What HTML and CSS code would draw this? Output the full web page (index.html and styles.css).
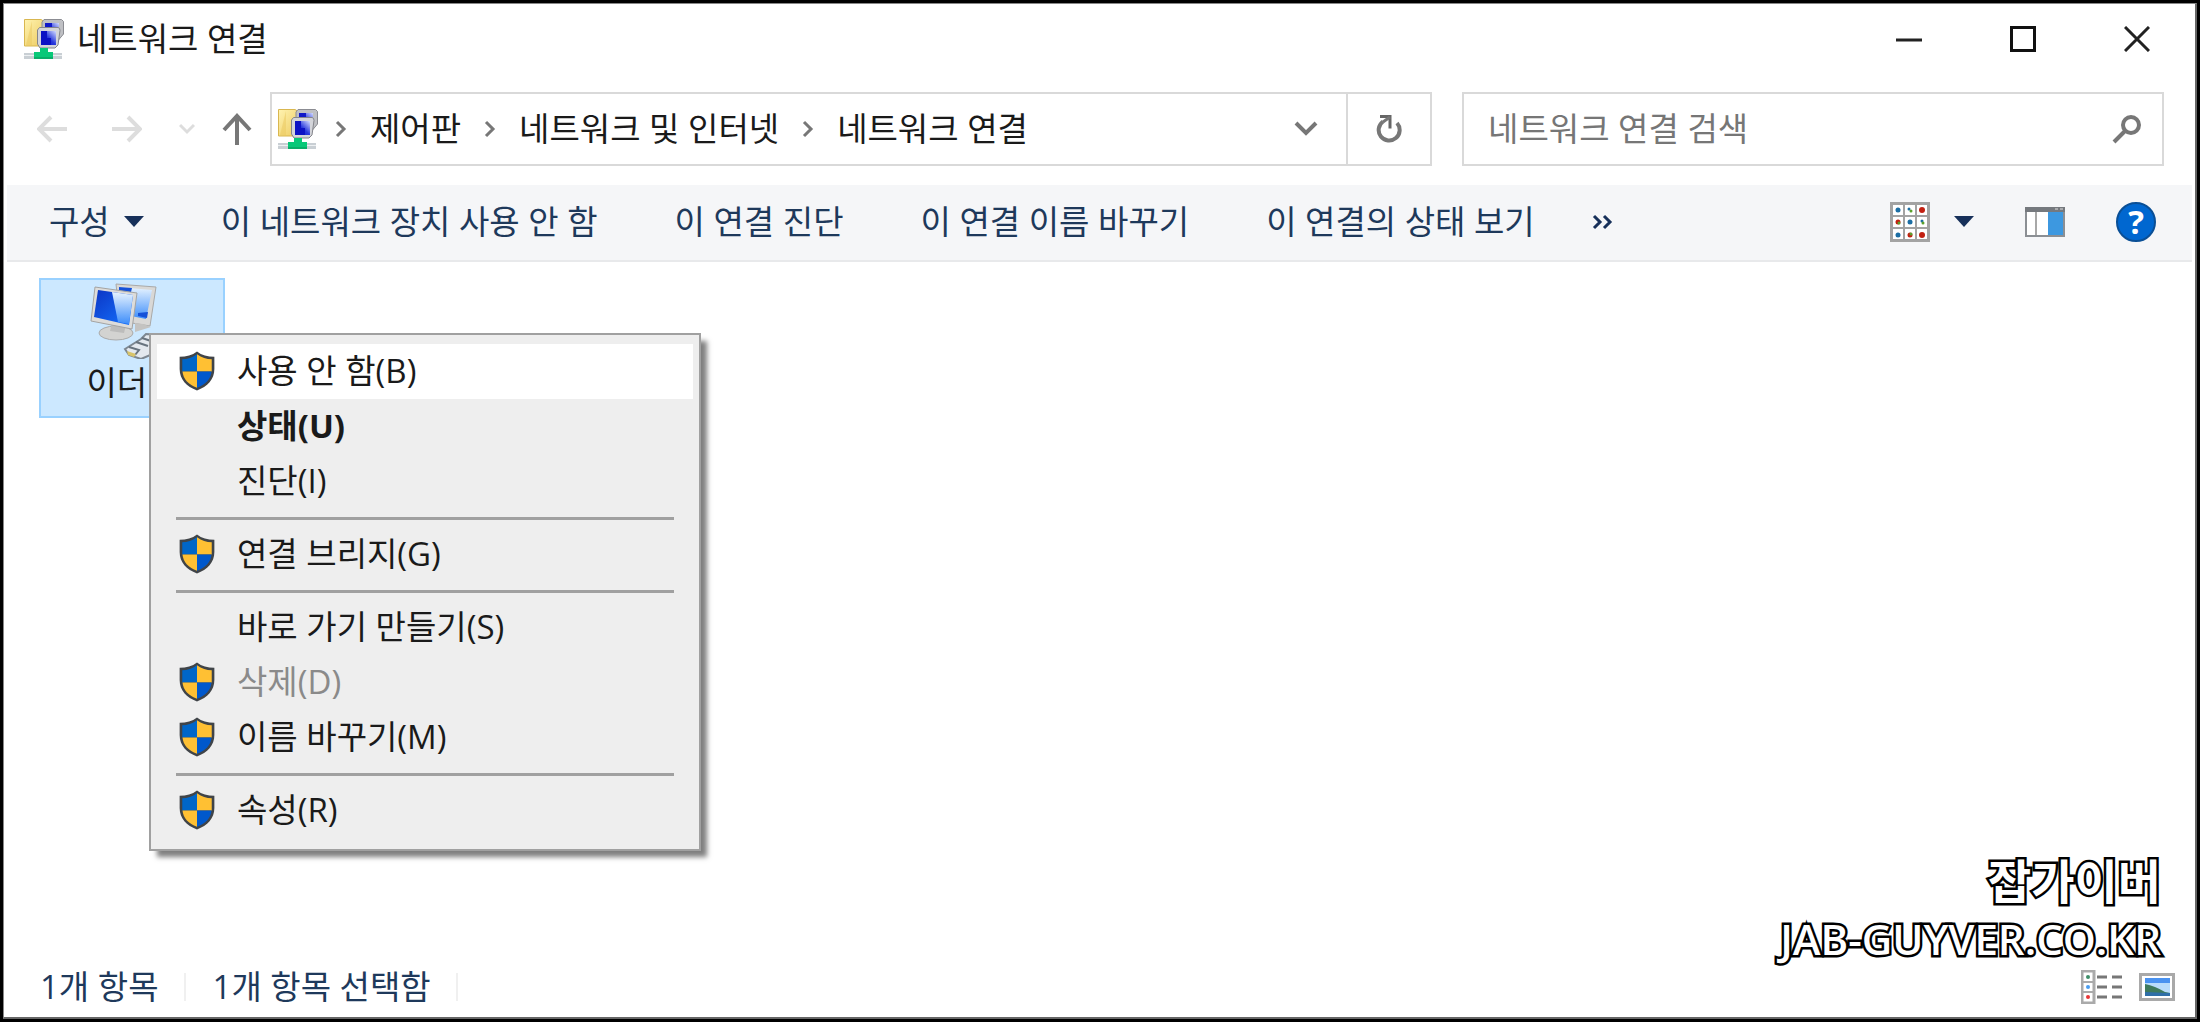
FILE: index.html
```html
<!DOCTYPE html>
<html lang="ko">
<head>
    <meta charset="UTF-8">
    <meta name="viewport" content="width=device-width, initial-scale=1.0">
    <title>네트워크 연결</title>
    <link rel="stylesheet" href="styles.css">
</head>
<body>
    <!-- Shared icons -->
    <svg class="sprite" aria-hidden="true">
        <defs>
            <linearGradient id="folder-fill" x1="0" y1="0" x2="1" y2="1">
                <stop offset="0" stop-color="#fff3b0"/>
                <stop offset="1" stop-color="#ecc95c"/>
            </linearGradient>
            <linearGradient id="screen-fill" x1="0" y1="1" x2="1" y2="0">
                <stop offset="0" stop-color="#0a14c4"/>
                <stop offset="0.5" stop-color="#2838dc"/>
                <stop offset="1" stop-color="#d4dcff"/>
            </linearGradient>
            <linearGradient id="glass-fill" x1="0" y1="0" x2="0" y2="1">
                <stop offset="0" stop-color="#e8f4ff"/>
                <stop offset="1" stop-color="#3d8dfa"/>
            </linearGradient>
            <linearGradient id="blue-fill" x1="0" y1="0" x2="1" y2="1">
                <stop offset="0" stop-color="#0b35c4"/>
                <stop offset="1" stop-color="#1673ff"/>
            </linearGradient>
        </defs>
        <symbol id="icon-network" viewBox="0 0 40 42">
            <path d="M0.5 1.5H17l5 3V28H0.5z" fill="url(#folder-fill)" stroke="#d9b750"/>
            <path d="M2 27L8 3v25z" fill="#e9c75e" opacity=".5"/>
            <path d="M20 1.5h17.500l2 2V16l-5 6H20l-2-4V4z" fill="#bfc0c4" stroke="#8b8c92"/>
            <path d="M21 5h14v13H21z" fill="url(#screen-fill)"/>
            <path d="M21 5h7v4h-7z" fill="#1018c8"/>
            <path d="M15.500 9.500H34q2 0 2 3L34 27l-3 3H16l-2.500-4V12z" fill="#d4d5da" stroke="#85868c"/>
            <path d="M17 13h15v14H17z" fill="url(#screen-fill)"/>
            <path d="M17 13h6v7h4v7H17z" fill="#0c12c4"/>
            <path d="M0 35h38v6H0z" fill="#c9cfd4"/>
            <path d="M0 37h38v1H0z" fill="#edf0f2"/>
            <path d="M16 30h8v4h5v7H10v-7h6z" fill="#08c878"/>
            <path d="M10 40h19" stroke="#0b9358"/>
        </symbol>
        <symbol id="icon-shield" viewBox="1 1 34 38">
            <path d="M18 1.500C13.500 5 8 6.500 1.500 6.500V18C1.500 28 8 34.500 18 38.500C28 34.500 34.500 28 34.500 18V6.500C28 6.500 22.500 5 18 1.500z" fill="#404448"/>
            <path d="M18 4C13.500 7.500 9 8.500 4 8.800V20.500H18z" fill="#0066c8"/>
            <path d="M18 4C22.500 7.500 27 8.500 32 8.800V20.500H18z" fill="#ffc033"/>
            <path d="M4.200 20.500C5 28 10 33 18 36V20.500z" fill="#ffc033"/>
            <path d="M31.800 20.500C31 28 26 33 18 36V20.500z" fill="#0058cc"/>
        </symbol>
        <symbol id="icon-chevron" viewBox="0 0 12 18">
            <path d="M2 2l7 7-7 7" fill="none" stroke="#777" stroke-width="3"/>
        </symbol>
        <symbol id="icon-caret" viewBox="0 0 20 11">
            <path d="M0 0h20L10 11z" fill="#17305a"/>
        </symbol>
    </svg>

    <div class="window">
        <header class="titlebar">
            <svg class="app-icon"><use href="#icon-network"/></svg>
            <h1>네트워크 연결</h1>
            <div class="window-controls">
                <button type="button" aria-label="최소화">
                    <svg width="26" height="26"><path d="M0 14h26" stroke="#222" stroke-width="3"/></svg>
                </button>
                <button type="button" aria-label="최대화">
                    <svg width="26" height="26"><path d="M1.500 1.500h23v23h-23z" fill="none" stroke="#111" stroke-width="3"/></svg>
                </button>
                <button type="button" aria-label="닫기">
                    <svg width="26" height="26"><path d="M1 1l24 24M25 1L1 25" stroke="#222" stroke-width="3"/></svg>
                </button>
            </div>
        </header>

        <div class="navbar">
            <div class="history">
                <button type="button" aria-label="뒤로" disabled>
                    <svg width="30" height="28"><path d="M30 14H3M14 2L2 14l12 12" fill="none" stroke="#ddd" stroke-width="4"/></svg>
                </button>
                <button type="button" aria-label="앞으로" disabled>
                    <svg width="30" height="28"><path d="M0 14h27M16 2l12 12-12 12" fill="none" stroke="#ddd" stroke-width="4"/></svg>
                </button>
                <button type="button" class="recent" aria-label="최근 위치" disabled>
                    <svg width="16" height="12"><path d="M1 2l7 7 7-7" fill="none" stroke="#ddd" stroke-width="3"/></svg>
                </button>
                <button type="button" aria-label="위로">
                    <svg width="30" height="32"><path d="M15 32V4M2 17L15 3l13 14" fill="none" stroke="#777" stroke-width="4"/></svg>
                </button>
            </div>
            <div class="address">
                <nav class="crumbs" aria-label="주소">
                    <svg class="app-icon"><use href="#icon-network"/></svg>
                    <svg class="chevron"><use href="#icon-chevron"/></svg>
                    <a href="#">제어판</a>
                    <svg class="chevron"><use href="#icon-chevron"/></svg>
                    <a href="#">네트워크 및 인터넷</a>
                    <svg class="chevron"><use href="#icon-chevron"/></svg>
                    <a href="#">네트워크 연결</a>
                </nav>
                <button type="button" class="drop" aria-label="이전 위치">
                    <svg width="24" height="18"><path d="M2 3l10 10L22 3" fill="none" stroke="#777" stroke-width="4"/></svg>
                </button>
                <button type="button" class="refresh" aria-label="새로 고침">
                    <svg width="26" height="30"><path d="M4 2.500h10v12" fill="none" stroke="#666" stroke-width="3"/><path d="M7 7.500A10.500 10.500 0 1 0 21 9" fill="none" stroke="#777" stroke-width="4"/><path d="M7 8l7-5" stroke="#777" stroke-width="3"/></svg>
                </button>
            </div>
            <form class="search">
                <input type="text" placeholder="네트워크 연결 검색" aria-label="네트워크 연결 검색">
                <button type="submit" aria-label="검색">
                    <svg width="30" height="30"><circle cx="19" cy="11" r="8" fill="none" stroke="#777" stroke-width="4"/><path d="M13 17L2 28" stroke="#777" stroke-width="4"/></svg>
                </button>
            </form>
        </div>

        <div class="commandbar">
            <button type="button" class="organize">구성 <svg class="caret"><use href="#icon-caret"/></svg></button>
            <button type="button">이 네트워크 장치 사용 안 함</button>
            <button type="button">이 연결 진단</button>
            <button type="button">이 연결 이름 바꾸기</button>
            <button type="button">이 연결의 상태 보기</button>
            <button type="button" class="more" aria-label="추가 명령">
                <svg width="22" height="16"><path d="M2 2l6 6-6 6M12 2l6 6-6 6" fill="none" stroke="#17305a" stroke-width="3"/></svg>
            </button>
            <div class="view-tools">
                <button type="button" class="view-mode" aria-label="보기 변경">
                    <svg width="40" height="40">
                        <path d="M0 0h40v40H0z" fill="#a3a3a3"/>
                        <path d="M3 3h10v10H3zM15 3h10v10H15zM27 3h10v10H27zM3 15h10v10H3zM15 15h10v10H15zM27 15h10v10H27zM3 27h10v10H3zM15 27h10v10H15zM27 27h10v10H27z" fill="#fff"/>
                        <g fill="#1c6ea4"><circle cx="8" cy="8" r="2.500"/><circle cx="20" cy="20" r="2.500"/><circle cx="8" cy="33" r="2.500"/><circle cx="19" cy="7" r="1.500"/><circle cx="32" cy="19" r="1.500"/></g>
                        <g fill="#c22012"><circle cx="32" cy="8" r="3"/><circle cx="8" cy="20" r="2.500"/><circle cx="20" cy="33" r="2.500"/><circle cx="32" cy="33" r="3"/></g>
                        <g fill="#5aa02c"><circle cx="21" cy="9" r="1.500"/><circle cx="33" cy="21" r="1.500"/><circle cx="9" cy="21" r="1.500"/><circle cx="21" cy="32" r="1.500"/></g>
                    </svg>
                    <svg class="caret"><use href="#icon-caret"/></svg>
                </button>
                <button type="button" aria-label="미리 보기 창">
                    <svg width="40" height="30">
                        <path d="M1 1h38v28H1z" fill="#fff" stroke="#8b8f94" stroke-width="2"/>
                        <path d="M0 0h40v5H0z" fill="#75797e"/>
                        <path d="M30 2h3M35 2h3" stroke="#ddd"/>
                        <path d="M11 5v23" stroke="#a8a8a8" stroke-width="2"/>
                        <path d="M23 5h15v23H23z" fill="#3d98e0"/>
                    </svg>
                </button>
                <button type="button" class="help" aria-label="도움말">?</button>
            </div>
        </div>

        <main class="content">
            <div class="item selected">
                <svg width="84" height="76" viewBox="0 0 84 76">
                    <path d="M26 1l40 3-6 39-30-5z" fill="#d9d8d6" stroke="#a9a9a8"/>
                    <path d="M29 4l33 3-6 29-25-5z" fill="url(#glass-fill)"/>
                    <path d="M29 4l13 1-2 8-11-4zM48 30l10-1-1 6-9-2z" fill="#1450d8"/>
                    <path d="M45 40l8 1 8 3-16 5z" fill="#c4c3c1"/>
                    <ellipse cx="26" cy="50" rx="17" ry="7" fill="#d3d3d1" stroke="#aaa"/>
                    <path d="M22 40l14 2-2 8-14-2z" fill="#bcbcbb"/>
                    <path d="M5 4l42 6-5 36L1 38z" fill="#dddcda" stroke="#a4a4a3"/>
                    <path d="M8 7l35 5-4 30L4 34z" fill="url(#blue-fill)"/>
                    <path d="M22 9l21 3-4 29-11-2z" fill="url(#glass-fill)"/>
                    <path d="M35 66l16-10 5-5 16 1v15l-21 9-12-4z" fill="#e3e8ee" stroke="#7d8791" stroke-width="2"/>
                    <path d="M39 64l10 3-4 5M46 59l12 4M52 55l12 4" fill="none" stroke="#68737e" stroke-width="2"/>
                    <path d="M37 68l9 3-2 3-6-2z" fill="#d8c46a"/>
                </svg>
                <span>이더넷</span>
            </div>

            <ul class="context-menu" role="menu">
                <li><button type="button" class="active"><svg><use href="#icon-shield"/></svg>사용 안 함(B)</button></li>
                <li><button type="button" class="default">상태(U)</button></li>
                <li><button type="button">진단(I)</button></li>
                <li class="separator"></li>
                <li><button type="button"><svg><use href="#icon-shield"/></svg>연결 브리지(G)</button></li>
                <li class="separator"></li>
                <li><button type="button">바로 가기 만들기(S)</button></li>
                <li><button type="button" disabled><svg><use href="#icon-shield"/></svg>삭제(D)</button></li>
                <li><button type="button"><svg><use href="#icon-shield"/></svg>이름 바꾸기(M)</button></li>
                <li class="separator"></li>
                <li><button type="button"><svg><use href="#icon-shield"/></svg>속성(R)</button></li>
            </ul>

            <div class="watermark">
                <div class="watermark-name">잡가이버</div>
                <div>JAB-GUYVER.CO.KR</div>
            </div>
        </main>

        <footer class="statusbar">
            <span>1개 항목</span>
            <span>1개 항목 선택함</span>
            <div class="layout-tools">
                <button type="button" aria-label="자세히">
                    <svg width="42" height="34">
                        <path d="M1 1h12v32H1z" fill="#fff" stroke="#aaa" stroke-width="3"/>
                        <path d="M1 12h12M1 22h12" stroke="#aaa" stroke-width="2"/>
                        <circle cx="7" cy="7" r="2" fill="#3f8f6a"/><circle cx="7" cy="17" r="2" fill="#4a9df0"/><circle cx="7" cy="27" r="2" fill="#e83838"/>
                        <path d="M16 7h10M31 7h10M16 17h10M31 17h10M16 27h10M31 27h10" stroke="#777" stroke-width="3"/>
                    </svg>
                </button>
                <button type="button" aria-label="큰 아이콘">
                    <svg width="36" height="28">
                        <path d="M1.500 1.500h33v25h-33z" fill="#fff" stroke="#a9a9a9" stroke-width="3"/>
                        <path d="M6 5h25v18H6z" fill="#b9dcfb"/>
                        <path d="M6 5h25v5H6z" fill="#4a92f0"/>
                        <path d="M6 11q10 2 20 8l5 1v3H6z" fill="#3f7a5c"/>
                        <path d="M6 19l25 1v3H6z" fill="#2f6fa8"/>
                    </svg>
                </button>
            </div>
        </footer>
    </div>
</body>
</html>
```
FILE: styles.css
```css
* {
    box-sizing: border-box;
}
body {
    margin: 0;
    padding: 3px;
    min-height: 100vh;
    display: flex;
    background-color: #000;
    font-family: "Open Sans", "Noto Sans CJK KR", sans-serif;
    font-size: 33px;
    line-height: 48px;
    color: #1a1a1a;
}
button, input {
    font: inherit;
    color: inherit;
    background: none;
    border: none;
    padding: 0;
}
button {
    display: flex;
    align-items: center;
    white-space: nowrap;
}
svg {
    display: block;
    flex: none;
}
.sprite {
    position: absolute;
    width: 0;
    height: 0;
}
.window {
    flex: 1;
    display: flex;
    flex-direction: column;
    background-color: #fff;
    border: 1px solid #888;
    border-right: 2px solid #666;
    border-bottom: 2px solid #666;
}

/* Title bar */
.titlebar {
    display: flex;
    align-items: center;
    height: 70px;
    padding: 0 45px 0 20px;
}
.titlebar h1 {
    margin: 0 0 0 13px;
    font-size: 33px;
    font-weight: 400;
}
.app-icon {
    width: 40px;
    height: 42px;
}
.window-controls {
    display: flex;
    gap: 88px;
    margin-left: auto;
}

/* Navigation row */
.navbar {
    display: flex;
    height: 111px;
    padding: 18px 31px 19px 33px;
}
.history {
    display: flex;
    align-items: center;
    width: 233px;
    gap: 45px;
}
.history .recent {
    margin: 0 -18px 0 -8px;
}
.address, .search {
    display: flex;
    align-items: center;
    border: 2px solid #d9d9d9;
}
.address {
    flex: 1;
    align-items: stretch;
    margin-right: 30px;
}
.crumbs {
    flex: 1;
    display: flex;
    align-items: center;
    padding-left: 6px;
}
.crumbs a {
    color: inherit;
    text-decoration: none;
    margin: 0 23px;
}
.chevron {
    width: 12px;
    height: 18px;
}
.crumbs .app-icon {
    margin-right: 17px;
}
.drop {
    padding: 0 28px;
}
.refresh {
    padding: 0 28px;
    border-left: 2px solid #d9d9d9;
}
.search {
    flex: 0 0 33%;
    padding: 0 20px 0 24px;
}
.search input {
    flex: 1;
    min-width: 0;
    height: 48px;
}
.search input::placeholder {
    color: #767676;
    opacity: 1;
}

/* Command bar */
.commandbar {
    display: flex;
    align-items: center;
    gap: 77px;
    height: 77px;
    margin: 0 3px;
    padding: 0 36px 2px 42px;
    background-color: #f5f6f8;
    border-bottom: 2px solid #e8e9eb;
    color: #1e395b;
}
.caret {
    width: 20px;
    height: 11px;
}
.organize {
    gap: 14px;
}
.more {
    margin-left: -20px;
}
.view-tools {
    display: flex;
    align-items: center;
    gap: 51px;
    margin-left: auto;
}
.view-mode {
    gap: 24px;
}
.help {
    justify-content: center;
    width: 40px;
    height: 40px;
    border: 2px solid #0a4f96;
    border-radius: 50%;
    background-color: #0067d0;
    color: #fff;
    font-size: 33px;
    font-weight: 700;
}

/* Connections */
.content {
    flex: 1;
    position: relative;
    padding: 16px 35px;
}
.item {
    display: flex;
    flex-direction: column;
    align-items: center;
    width: 186px;
    height: 140px;
    padding-top: 3px;
    border: 2px solid transparent;
}
.item.selected {
    background-color: #cce8ff;
    border-color: #99d1ff;
}
.context-menu {
    position: absolute;
    top: 71px;
    left: 145px;
    width: 552px;
    margin: 0;
    padding: 9px 6px 11px;
    list-style: none;
    background-color: #eee;
    border: 2px solid #a0a0a0;
    box-shadow: 7px 7px 5px -1px rgba(0, 0, 0, 0.5);
}
.context-menu button {
    width: 100%;
    height: 55px;
    padding: 0 0 2px 80px;
}
.context-menu svg {
    width: 36px;
    height: 40px;
    margin: 0 22px 0 -58px;
}
.context-menu .active {
    background-color: #fff;
}
.context-menu .default {
    font-weight: 700;
}
.context-menu button:disabled {
    color: #8a8a8a;
}
.separator {
    height: 3px;
    margin: 8px 19px 7px;
    background-color: #a0a0a0;
}
.watermark {
    position: absolute;
    right: 34px;
    bottom: -8px;
    font-size: 42px;
    font-weight: 600;
    line-height: 57px;
    text-align: right;
    color: #fff;
    -webkit-text-stroke: 5px #000;
    paint-order: stroke fill;
}
.watermark-name {
    font-size: 47px;
}

/* Status bar */
.statusbar {
    display: flex;
    align-items: center;
    height: 58px;
    padding: 0 20px 2px 36px;
    color: #1e395b;
}
.statusbar span {
    line-height: 28px;
    padding-right: 25px;
    margin-right: 27px;
    border-right: 2px solid #f0f0f0;
}
.layout-tools {
    display: flex;
    align-items: center;
    gap: 16px;
    margin-left: auto;
}
```
